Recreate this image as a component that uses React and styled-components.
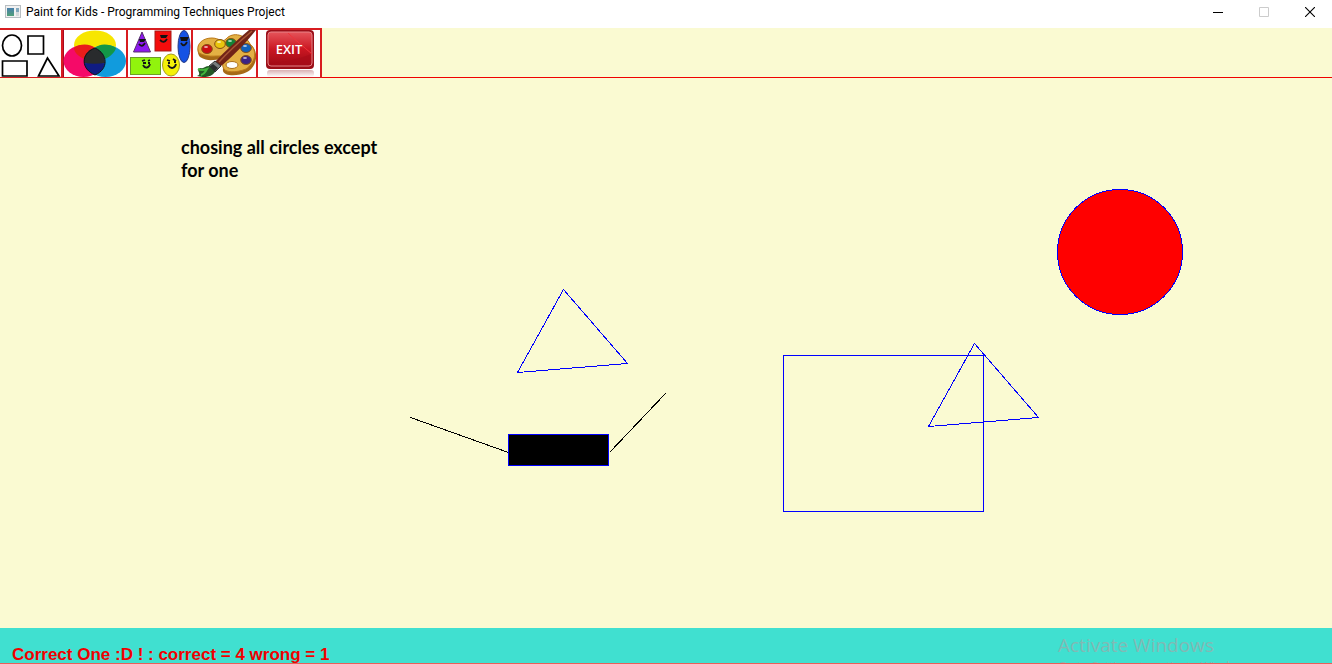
import React from "react";
import styled, { createGlobalStyle } from "styled-components";

const GlobalStyle = createGlobalStyle`
  *, *::before, *::after { box-sizing: border-box; }
  html, body, #root { height: 100%; }
  body { margin: 0; overflow: hidden; }
`;

const Window = styled.div`
  display: flex;
  flex-direction: column;
  height: 100%;
  background: #fafad2;
`;

const TitleBar = styled.header`
  display: flex;
  align-items: center;
  flex: none;
  height: 28px;
  padding: 0 0 4px 5px;
  background: #fff;
`;

const AppIcon = styled.svg`
  display: block;
  width: 16px;
  height: 14px;
  margin-right: 5px;
`;

const Title = styled.h1`
  flex: 1;
  margin: 0;
  color: #000;
  font: 400 12px/14px Roboto, "Open Sans", sans-serif;
`;

const WindowButton = styled.button`
  display: flex;
  align-items: center;
  justify-content: center;
  width: 46px;
  height: 24px;
  padding: 0;
  border: 0;
  background: none;
  color: ${(p) => (p.disabled ? "#ccc" : "#000")};
`;

const WindowButtons = styled.div`
  display: flex;
  margin-right: -1px;
`;

const Toolbar = styled.nav`
  display: flex;
  flex: none;
  height: 50px;
  border-bottom: 1px solid #f00000;
`;

const ToolButton = styled.button`
  flex: none;
  width: ${(p) => p.$width || 65}px;
  height: 50px;
  padding: 0;
  border: solid #d81c20;
  border-width: 2px 2px 1px 0;
  background: #fff;
  svg { display: block; width: 100%; height: 100%; }
`;

const Canvas = styled.main`
  position: relative;
  flex: 1;
  min-height: 0;
  overflow: hidden;
`;

const Drawing = styled.svg`
  position: absolute;
  top: 0;
  left: 0;
  width: 100%;
  height: 100%;
  shape-rendering: crispEdges;
`;

const Note = styled.p`
  position: absolute;
  top: 58px;
  left: 181px;
  width: 220px;
  margin: 0;
  color: #000;
  font: 700 18px/23px Lato, "Open Sans", sans-serif;
`;

const StatusBar = styled.footer`
  position: relative;
  display: flex;
  align-items: flex-end;
  flex: none;
  height: 36px;
  padding-left: 12px;
  overflow: hidden;
  border-bottom: 1px solid #e8605a;
  background: #40e0d0;
`;

const Score = styled.output`
  color: #f00000;
  font: 700 17px/16px "Liberation Sans", Arial, sans-serif;
`;

const Watermark = styled.div`
  position: absolute;
  top: 4px;
  right: 48px;
  width: 226px;
  color: #82b9b4;
  font: 400 12px/16px "Open Sans", sans-serif;
  white-space: nowrap;
`;

const WatermarkTitle = styled.div`
  font-size: 19px;
  line-height: 27px;
`;

function ShapesIcon() {
  return (
    <svg viewBox="0 0 61 47" fill="none" stroke="#000" strokeWidth="1.7">
      <ellipse cx="12" cy="15.500" rx="9.500" ry="10.500" />
      <path d="M28 6H43.500V24H28Z M2.500 31H27V46H2.500Z M47.500 28L38.500 46H59Z" />
    </svg>
  );
}

function ColorsIcon() {
  return (
    <svg viewBox="0 0 63 47">
      <rect x="0" width="1" height="47" fill="#a80920" />
      <ellipse cx="32" cy="15" rx="21" ry="14.500" fill="#f7e600" />
      <ellipse cx="20.500" cy="31" rx="20" ry="16" fill="#f50a68" />
      <ellipse cx="42.500" cy="31" rx="20.500" ry="16" fill="#119bdd" />
      <path d="M11 18C17 13 28 14 32 18C27 20 22 24 21 29C15 26 11 22 11 18Z" fill="#e91d1b" />
      <path d="M53 18C45 13 36 14 32 18C36 20 41 24 42 29C47 27 52 22 53 18Z" fill="#139747" />
      <path d="M21 29C22 23 27 19 32 18C37 20 42 24 42 33C36 36 26 35 21 33Z" fill="#292b2d" />
      <path d="M21 33C28 34 35 34 42 33C41 40 36 43 32 45C26 42 22 39 21 33Z" fill="#101c82" />
      <path d="M32 18C45 24 46 39 32 45C18 39 17 24 32 18Z" fill="none" stroke="#101315" />
    </svg>
  );
}

function FiguresIcon() {
  return (
    <svg viewBox="0 0 63 47">
      <path d="M14 2L22.500 22H5.500Z" fill="#8c18ef" stroke="#56306c" />
      <rect x="27" y="1" width="16" height="20" fill="#f40d0c" stroke="#a31c19" />
      <ellipse cx="56" cy="16.500" rx="6" ry="16" fill="#1552e4" stroke="#243883" />
      <rect x="2.500" y="27.500" width="30" height="17" fill="#91f30d" stroke="#6c9e26" />
      <ellipse cx="43" cy="35" rx="8.500" ry="11" fill="#f4f009" stroke="#a49b22" />
      <path d="M11 9H18L16 12H12Z M32 5H40L38 8H33Z M52 7H61L59 11H53Z" fill="#111" />
      <path d="M11 14Q14 18 17 13 M32 10Q36 14 39 9 M53 13Q56 18 59 12" fill="none" stroke="#151515" strokeWidth="1.8" />
      <g fill="none" stroke="#17151b" strokeWidth="1.8">
        <path d="M14 31L17 30M20 31L22 30M15 35C17 39 21 38 22 34" />
        <path d="M39 30L42 31M45 29L48 31M40 35C43 40 47 38 48 34" />
      </g>
      <path d="M15 33H18M20 33H22M40 33H42M46 32H48" stroke="#111" strokeWidth="2" />
    </svg>
  );
}

function PaletteIcon() {
  return (
    <svg viewBox="0 0 63 47">
      <path d="M7 27C1 19 7 8 19 8C26 8 29 14 33 9C40 1 53 5 57 14C67 21 64 37 54 42C44 47 31 46 30 41C29 34 35 33 33 30C25 27 18 34 7 27Z" fill="#a66a16" />
      <path d="M6 23C2 15 9 8 19 8C26 8 29 13 33 9C40 1 53 5 57 14C65 21 62 33 53 39C43 43 31 43 30 37C28 31 35 31 34 27C25 24 17 29 6 23Z" fill="#e3b043" stroke="#bc7a1b" />
      {[["#c90e12", 14, 19], ["#e9c60d", 27, 14], ["#148336", 38, 13], ["#1261b9", 53, 18], ["#3b2485", 53, 30]].map(([color, x, y]) => (
        <g key={color}>
          <ellipse cx={x} cy={y} rx="5.300" ry="4.500" fill={color} stroke="#865014" />
          <ellipse cx={x - 1} cy={y - 2} rx="2" ry="1" fill="#fff" opacity=".65" />
        </g>
      ))}
      <ellipse cx="39" cy="35" rx="6" ry="3.500" fill="#fff" stroke="#ad711c" />
      <path d="M56 0H63C52 14 38 28 28 36L22 32C32 21 44 10 56 0Z" fill="#702317" />
      <path d="M59 1C46 12 36 21 26 32" stroke="#a95635" strokeWidth="1.5" fill="none" />
      <path d="M22 31L28 36L22 42L16 36Z" fill="#777c7d" stroke="#303334" />
      <path d="M20 34L25 38L21 42L16 37Z" fill="#292d2e" />
      <path d="M16 36L22 42C17 49 8 47 4 46C10 44 1 39 8 38C11 39 12 36 16 36Z" fill="#235825" />
      <path d="M5 39C9 41 11 40 14 39C12 42 12 44 8 45" stroke="#42b53c" strokeWidth="2" fill="none" />
    </svg>
  );
}

function ExitIcon() {
  return (
    <svg viewBox="0 0 62 47">
      <defs>
        <linearGradient id="exit-red" x2="0" y2="1">
          <stop stopColor="#e5545a" />
          <stop offset=".5" stopColor="#cb1722" />
          <stop offset="1" stopColor="#9d0a15" />
        </linearGradient>
        <linearGradient id="exit-reflection" x2="0" y2="1">
          <stop stopColor="#d9b0b3" />
          <stop offset="1" stopColor="#fff" />
        </linearGradient>
      </defs>
      <rect x="9" y="40" width="47" height="7" rx="3" fill="url(#exit-reflection)" />
      <rect x="8" y="0" width="48" height="39" rx="4" fill="#9b0e18" />
      <rect x="10" y="2" width="44" height="34" rx="3" fill="url(#exit-red)" stroke="#e78488" />
      <path d="M11 34C26 32 41 29 53 24V35H11Z" fill="#a90c18" opacity=".65" />
      <path d="M30 3C37 10 46 17 54 24" stroke="#f0343b" fill="none" />
      <text x="31" y="24" textAnchor="middle" fill="#fff" fontFamily="Open Sans, sans-serif" fontSize="13" fontWeight="600">EXIT</text>
    </svg>
  );
}

const tools = [
  { label: "Draw shapes", icon: ShapesIcon, width: 63 },
  { label: "Choose colours", icon: ColorsIcon },
  { label: "Play with figures", icon: FiguresIcon },
  { label: "Paint", icon: PaletteIcon },
  { label: "Exit", icon: ExitIcon, width: 64 },
];

export default function App() {
  return (
    <Window>
      <GlobalStyle />
      <TitleBar>
        <AppIcon viewBox="0 0 16 14" aria-hidden="true">
          <defs>
            <linearGradient id="app-pane" x2="0" y2="1">
              <stop stopColor="#487eac" />
              <stop offset="1" stopColor="#51a078" />
            </linearGradient>
          </defs>
          <rect x=".5" y=".5" width="15" height="12" fill="#f0f0f0" stroke="#b8bec2" />
          <rect x="2" y="3" width="7" height="8" fill="url(#app-pane)" />
          <rect x="11" y="3" width="3" height="4" fill="#83a9bd" />
          <rect x="11" y="7" width="3" height="4" fill="#d2d8da" />
        </AppIcon>
        <Title>Paint for Kids - Programming Techniques Project</Title>
        <WindowButtons>
          <WindowButton aria-label="Minimize">
            <svg width="10" height="10" stroke="currentColor"><path d="M0 5.500H10" /></svg>
          </WindowButton>
          <WindowButton aria-label="Maximize" disabled>
            <svg width="10" height="10" fill="none" stroke="currentColor"><path d="M.5.500H9.500V9.500H.5Z" /></svg>
          </WindowButton>
          <WindowButton aria-label="Close">
            <svg width="10" height="10" stroke="currentColor" strokeWidth="1.100"><path d="M0 0L10 10M10 0L0 10" /></svg>
          </WindowButton>
        </WindowButtons>
      </TitleBar>

      <Toolbar aria-label="Tools">
        {tools.map(({ label, icon: Icon, width }) => (
          <ToolButton key={label} aria-label={label} $width={width}><Icon /></ToolButton>
        ))}
      </Toolbar>

      <Canvas>
        <Drawing fill="none" stroke="#00f" aria-label="Drawing">
          <path d="M563.500 211.500L627.500 285.500L517.500 294.500Z" />
          <path d="M410.500 339.500L508.500 374.500M609.500 374.500L665.500 315.500" stroke="#000" />
          <rect x="508.500" y="356.500" width="100" height="31" fill="#000" />
          <rect x="783.500" y="277.500" width="200" height="156" />
          <path d="M974.500 265.500L1038.500 339.500L928.500 348.500Z" />
          <circle cx="1120" cy="174" r="62.500" fill="#f00" />
        </Drawing>
        <Note>chosing all circles except for one</Note>
      </Canvas>

      <StatusBar>
        <Score>Correct One :D ! : correct = 4 wrong = 1</Score>
        <Watermark>
          <WatermarkTitle>Activate Windows</WatermarkTitle>
          Go to Settings to activate Windows.
        </Watermark>
      </StatusBar>
    </Window>
  );
}
